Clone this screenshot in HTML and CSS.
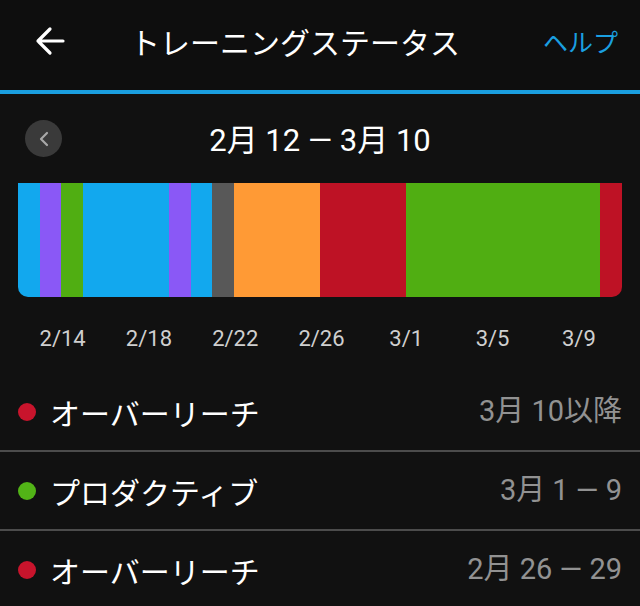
FILE: index.html
```html
<!DOCTYPE html>
<html lang="ja">
<head>
<meta charset="utf-8">
<title>トレーニングステータス</title>
<link rel="stylesheet" href="styles.css">
</head>
<body>
<div class="screen">
  <header class="topbar">
    <button class="back" aria-label="戻る">
      <svg width="30" height="30" viewBox="0 0 30 30"><path d="M28 15 H3 M15 3 L3 15 L15 27" fill="none" stroke="#fff" stroke-width="3.2" stroke-linecap="round" stroke-linejoin="round"/></svg>
    </button>
    <h1 class="title">トレーニングステータス</h1>
    <a class="help">ヘルプ</a>
  </header>

  <div class="period">
    <button class="prev" aria-label="前へ">
      <svg width="12" height="16" viewBox="0 0 12 16"><path d="M9 2 L3 8 L9 14" fill="none" stroke="#a8a8a8" stroke-width="2.2" stroke-linecap="round" stroke-linejoin="round"/></svg>
    </button>
    <div class="range">2月 12 — 3月 10</div>
  </div>

  <div class="timeline">
    <div class="seg s-recovery" style="flex-grow:1"></div>
    <div class="seg s-peaking" style="flex-grow:1"></div>
    <div class="seg s-productive" style="flex-grow:1"></div>
    <div class="seg s-recovery" style="flex-grow:4"></div>
    <div class="seg s-peaking" style="flex-grow:1"></div>
    <div class="seg s-recovery" style="flex-grow:1"></div>
    <div class="seg s-none" style="flex-grow:1"></div>
    <div class="seg s-unproductive" style="flex-grow:4"></div>
    <div class="seg s-overreach" style="flex-grow:4"></div>
    <div class="seg s-productive" style="flex-grow:9"></div>
    <div class="seg s-overreach" style="flex-grow:1"></div>
  </div>

  <div class="axis">
    <span class="tick" style="grid-column:2 / span 2">2/14</span>
    <span class="tick" style="grid-column:6 / span 2">2/18</span>
    <span class="tick" style="grid-column:10 / span 2">2/22</span>
    <span class="tick" style="grid-column:14 / span 2">2/26</span>
    <span class="tick" style="grid-column:18 / span 2">3/1</span>
    <span class="tick" style="grid-column:22 / span 2">3/5</span>
    <span class="tick" style="grid-column:26 / span 2">3/9</span>
  </div>

  <ul class="history">
    <li class="entry">
      <span class="dot dot-overreach"></span>
      <span class="status">オーバーリーチ</span>
      <span class="when">3月 10以降</span>
    </li>
    <li class="entry">
      <span class="dot dot-productive"></span>
      <span class="status">プロダクティブ</span>
      <span class="when">3月 1 — 9</span>
    </li>
    <li class="entry">
      <span class="dot dot-overreach"></span>
      <span class="status">オーバーリーチ</span>
      <span class="when">2月 26 — 29</span>
    </li>
  </ul>
</div>
</body>
</html>
```

FILE: styles.css
```css
* {
  box-sizing: border-box;
}

html, body {
  margin: 0;
  padding: 0;
  background: #111111;
}

body {
  font-family: Roboto, "Noto Sans CJK JP", sans-serif;
  color: #ffffff;
}

.screen {
  width: 640px;
  height: 606px;
  overflow: hidden;
  display: flex;
  flex-direction: column;
}

/* top app bar */
.topbar {
  height: 94px;
  flex: none;
  display: flex;
  align-items: center;
  padding: 0 22px 8px 35px;
  border-bottom: 4px solid #1a9fe0;
  background: #0e0e0e;
}

.back {
  width: 30px;
  height: 30px;
  padding: 0;
  border: 0;
  background: none;
  display: flex;
}

.title {
  margin: 0 0 0 65px;
  font-size: 30px;
  font-weight: 400;
  line-height: 1;
  flex: 1;
  font-family: "Noto Sans CJK JP", sans-serif;
}

.help {
  font-family: "Noto Sans CJK JP", sans-serif;
  font-size: 25px;
  color: #1a9fe0;
  line-height: 1;
}

/* date range selector */
.period {
  height: 88px;
  flex: none;
  position: relative;
  display: flex;
  align-items: center;
  justify-content: center;
}

.prev {
  position: absolute;
  left: 25px;
  top: 26px;
  width: 37px;
  height: 37px;
  border-radius: 50%;
  border: 0;
  padding: 0;
  background: #3a3a3a;
  display: flex;
  align-items: center;
  justify-content: center;
}

.range {
  font-size: 31px;
  line-height: 1;
  padding-top: 4px;
}

/* status timeline */
.timeline {
  margin: 1px 18px 0;
  height: 114px;
  flex: none;
  display: flex;
  border-radius: 0 0 10px 10px;
  overflow: hidden;
}

.seg {
  flex-basis: 0;
}

.s-recovery { background: #12a8ee; }
.s-peaking { background: #8a58f6; }
.s-productive { background: #50ae12; }
.s-none { background: #585858; }
.s-unproductive { background: #ff9a35; }
.s-overreach { background: #be1225; }

.axis {
  margin: 0 18px;
  height: 76px;
  flex: none;
  display: grid;
  grid-template-columns: repeat(28, 1fr);
  align-items: center;
  padding-top: 6px;
}

.tick {
  text-align: center;
  font-size: 22px;
  color: #cfcfcf;
  white-space: nowrap;
}

/* status history */
.history {
  list-style: none;
  margin: 0;
  padding: 0;
}

.entry {
  height: 79px;
  display: flex;
  align-items: center;
  padding: 0 18px 0 18px;
  border-bottom: 2px solid #4c4c4c;
}

.dot {
  width: 18px;
  height: 18px;
  border-radius: 50%;
  margin-right: 14px;
  flex: none;
}

.dot-overreach { background: #c8142c; }
.dot-productive { background: #52b417; }

.status {
  flex: 1;
  font-family: "Noto Sans CJK JP", sans-serif;
  font-size: 30px;
  line-height: 1;
}

.when {
  font-size: 29px;
  color: #929292;
  line-height: 1;
}
```
